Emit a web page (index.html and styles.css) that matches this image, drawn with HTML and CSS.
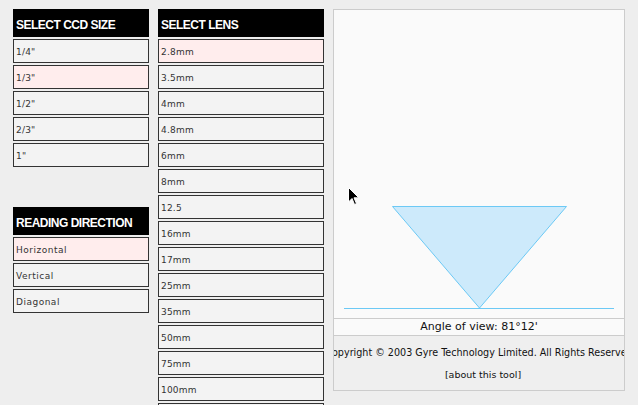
FILE: index.html
```html
<!DOCTYPE html>
<html>
<head>
<meta charset="utf-8">
<link rel="stylesheet" href="styles.css">
</head>
<body>
<div class="page">
  <div class="col col-ccd">
    <div class="head">SELECT CCD SIZE</div>
    <div class="opt">1/4"</div>
    <div class="opt sel">1/3"</div>
    <div class="opt">1/2"</div>
    <div class="opt">2/3"</div>
    <div class="opt">1"</div>
    <div class="head head-dir">READING DIRECTION</div>
    <div class="opt dir sel">Horizontal</div>
    <div class="opt dir">Vertical</div>
    <div class="opt dir">Diagonal</div>
  </div>
  <div class="col col-lens">
    <div class="head">SELECT LENS</div>
    <div class="opt sel">2.8mm</div>
    <div class="opt">3.5mm</div>
    <div class="opt">4mm</div>
    <div class="opt">4.8mm</div>
    <div class="opt">6mm</div>
    <div class="opt">8mm</div>
    <div class="opt">12.5</div>
    <div class="opt">16mm</div>
    <div class="opt">17mm</div>
    <div class="opt">25mm</div>
    <div class="opt">35mm</div>
    <div class="opt">50mm</div>
    <div class="opt">75mm</div>
    <div class="opt">100mm</div>
    <div class="opt"></div>
  </div>
  <div class="panel">
    <div class="canvas">
      <svg width="290" height="308" viewBox="0 0 290 308">
        <polygon points="58.5,196.5 232.5,196.5 145.5,298" fill="#cdeafb" stroke="#6cc9f5" stroke-width="1"/>
        <line x1="10" y1="298.5" x2="280" y2="298.5" stroke="#6cc9f5" stroke-width="1"/>
      </svg>
    </div>
    <div class="angle">Angle of view: 81°12'</div>
    <div class="foot">
      <div class="copy">Copyright © 2003 Gyre Technology Limited. All Rights Reserved</div>
      <div class="about">[about this tool]</div>
    </div>
  </div>
</div>
<svg class="cursor" width="12" height="20" viewBox="0 0 12 20">
  <path d="M0.5,0.5 L0.5,15 L4,11.5 L6.5,17.5 L8.5,16.6 L6,10.8 L10.8,10.8 Z" fill="#000" stroke="#fff" stroke-width="1"/>
</svg>
</body>
</html>
```

FILE: styles.css
```css
html, body {
  margin: 0;
  padding: 0;
  background: #eeeeee;
  height: 405px;
  overflow: hidden;
}
body {
  position: relative;
  font-family: "DejaVu Sans", sans-serif;
}
.page {
  display: flex;
  align-items: flex-start;
  padding: 9px 0 0 13px;
  gap: 9px;
}
.col {
  display: flex;
  flex-direction: column;
  gap: 2px;
}
.col-ccd { width: 136px; }
.col-lens { width: 166px; }
.head {
  background: #000;
  color: #fff;
  height: 28px;
  box-sizing: border-box;
  padding: 9px 0 0 3px;
  font-family: "Liberation Sans", Arial, sans-serif;
  font-weight: bold;
  font-size: 12px;
  letter-spacing: -0.5px;
  line-height: 14px;
}
.head-dir { margin-top: 38px; }
.opt {
  height: 24px;
  box-sizing: border-box;
  border: 1px solid #333;
  background: #f3f3f3;
  color: #333;
  font-size: 9px;
  line-height: 22px;
  padding: 1px 0 0 2px;
  letter-spacing: 0.2px;
}
.opt.sel { background: #ffeded; }
.opt.dir { letter-spacing: 0.5px; }
.panel {
  width: 292px;
  box-sizing: border-box;
  border: 1px solid #cccccc;
  background: #fafafa;
  overflow: hidden;
}
.canvas {
  height: 308px;
}
.canvas svg { display: block; }
.angle {
  border-top: 1px solid #cccccc;
  border-bottom: 1px solid #cccccc;
  height: 16px;
  line-height: 16px;
  text-align: center;
  font-size: 11px;
  color: #111;
}
.foot {
  background: #efefef;
  height: 54px;
  padding-top: 10px;
  box-sizing: border-box;
}
.copy, .about {
  color: #111;
  white-space: nowrap;
  display: flex;
  justify-content: center;
  line-height: 14px;
}
.copy { font-size: 9.6px; }
.about { margin-top: 8px; font-size: 9.5px; padding-left: 8px; }
.cursor {
  position: absolute;
  left: 348px;
  top: 187px;
}
```
